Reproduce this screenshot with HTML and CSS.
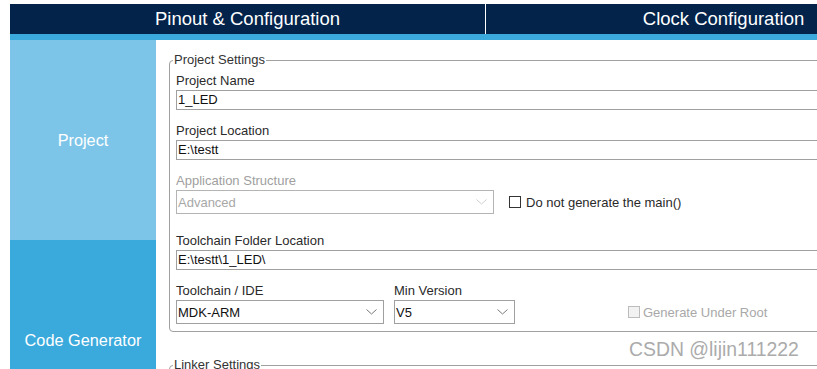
FILE: index.html
```html
<!DOCTYPE html>
<html>
<head>
<meta charset="utf-8">
<link rel="stylesheet" href="styles.css">
</head>
<body>
<div class="app">
  <header class="tabs">
    <div class="tab">Pinout &amp; Configuration</div>
    <div class="tab tab-second">Clock Configuration</div>
  </header>
  <div class="stripe"></div>
  <div class="content">
    <nav class="side">
      <div class="side-item side-light">Project</div>
      <div class="side-item side-dark">Code Generator</div>
    </nav>
    <main class="main">
      <fieldset class="group">
        <legend class="legend">Project Settings</legend>
        <div class="field">
          <div class="lbl">Project Name</div>
          <div class="input">1_LED</div>
        </div>
        <div class="field">
          <div class="lbl">Project Location</div>
          <div class="input">E:\testt</div>
        </div>
        <div class="field field-wide">
          <div class="lbl lbl-disabled">Application Structure</div>
          <div class="row">
            <div class="select select-disabled select-app">
              <span>Advanced</span>
              <svg class="chev" width="11" height="6" viewBox="0 0 11 6"><polyline points="0.5,0.5 5.5,5 10.5,0.5" fill="none" stroke="#d0d0d0" stroke-width="1"/></svg>
            </div>
            <div class="check">
              <span class="box"></span>
              <span class="check-text">Do not generate the main()</span>
            </div>
          </div>
        </div>
        <div class="field">
          <div class="lbl">Toolchain Folder Location</div>
          <div class="input">E:\testt\1_LED\</div>
        </div>
        <div class="row row-bottom">
          <div class="col col-ide">
            <div class="lbl">Toolchain / IDE</div>
            <div class="select">
              <span>MDK-ARM</span>
              <svg class="chev" width="11" height="6" viewBox="0 0 11 6"><polyline points="0.5,0.5 5.5,5 10.5,0.5" fill="none" stroke="#7a7a7a" stroke-width="1"/></svg>
            </div>
          </div>
          <div class="col col-ver">
            <div class="lbl">Min Version</div>
            <div class="select">
              <span>V5</span>
              <svg class="chev" width="11" height="6" viewBox="0 0 11 6"><polyline points="0.5,0.5 5.5,5 10.5,0.5" fill="none" stroke="#7a7a7a" stroke-width="1"/></svg>
            </div>
          </div>
          <div class="check check-disabled">
            <span class="box box-disabled"></span>
            <span class="check-text">Generate Under Root</span>
          </div>
        </div>
      </fieldset>
      <fieldset class="group group-linker">
        <legend class="legend">Linker Settings</legend>
      </fieldset>
    </main>
  </div>
  <div class="watermark">CSDN @lijin111222</div>
</div>
</body>
</html>
```
FILE: styles.css
```css
html, body {
  margin: 0;
  height: 369px;
  overflow: hidden;
  background: #fff;
}
body {
  font-family: "Liberation Sans", Arial, sans-serif;
}
.app {
  position: relative;
  box-sizing: border-box;
  height: 369px;
  padding: 4px 0 0 10px;
  display: flex;
  flex-direction: column;
  overflow: hidden;
}
.tabs {
  display: flex;
  flex: none;
  height: 30px;
  background: #03234b;
  overflow: hidden;
}
.tab {
  flex: none;
  width: 475px;
  color: #fff;
  font-size: 18.5px;
  display: flex;
  align-items: center;
  justify-content: center;
}
.tab-second {
  border-left: 1px solid #fff;
}
.stripe {
  flex: none;
  height: 6px;
  background: #3ca9dc;
}
.content {
  flex: 1;
  display: flex;
  min-height: 0;
}
.side {
  flex: none;
  width: 146px;
  display: flex;
  flex-direction: column;
}
.side-item {
  flex: none;
  height: 200px;
  display: flex;
  align-items: center;
  justify-content: center;
  color: #fff;
  font-size: 16.3px;
}
.side-light {
  background: #7dc5e8;
}
.side-dark {
  background: #3aa9dc;
}
.main {
  flex: 1;
  min-width: 0;
  overflow: hidden;
  padding: 12px 0 0 13px;
}
.group {
  box-sizing: border-box;
  width: 720px;
  margin: 0;
  border: 1px solid #a0a0a0;
  border-radius: 4px;
  padding: 4px 6px 7px 6px;
}
.legend {
  font-size: 13px;
  line-height: 16px;
  padding: 0 1px;
  margin-left: -3px;
  color: #333;
}
.group-linker {
  margin-top: 25px;
  height: 60px;
}
.field {
  margin-bottom: 12px;
}
.field-wide {
  margin-bottom: 18px;
}
.lbl {
  font-size: 13px;
  line-height: 16px;
  color: #2a2a2a;
  padding-top: 1px;
  margin-bottom: 1px;
  white-space: nowrap;
}
.lbl-disabled {
  color: #a0a0a0;
}
.input {
  box-sizing: border-box;
  height: 20px;
  border: 1px solid #a0a0a0;
  font-size: 13px;
  line-height: 18px;
  padding: 0 1px;
  color: #111;
}
.row {
  display: flex;
  align-items: center;
}
.row-bottom {
  align-items: flex-end;
}
.select {
  box-sizing: border-box;
  height: 24px;
  border: 1px solid #a0a0a0;
  display: flex;
  align-items: center;
  justify-content: space-between;
  padding: 0 6px 0 1px;
  font-size: 13px;
  color: #111;
}
.select-disabled {
  color: #a8a8a8;
  border-color: #b4b4b4;
}
.select-app {
  width: 318px;
}
.chev {
  display: block;
}
.col-ide {
  width: 208px;
}
.col-ver {
  width: 121px;
  margin-left: 10px;
}
.check {
  display: flex;
  align-items: center;
  margin-left: 15px;
  font-size: 13px;
  color: #2a2a2a;
}
.box {
  box-sizing: border-box;
  width: 12px;
  height: 12px;
  border: 1px solid #333;
  background: #fff;
  margin-right: 5px;
}
.check-disabled {
  margin-left: 113px;
  height: 24px;
  color: #a8a8a8;
}
.box-disabled {
  width: 12px;
  height: 12px;
  border-color: #bcbcbc;
  background: #f2f2f2;
  margin-right: 3px;
}
.watermark {
  position: absolute;
  left: 629px;
  top: 338px;
  font-size: 19.4px;
  color: #ababab;
  white-space: nowrap;
}
```
